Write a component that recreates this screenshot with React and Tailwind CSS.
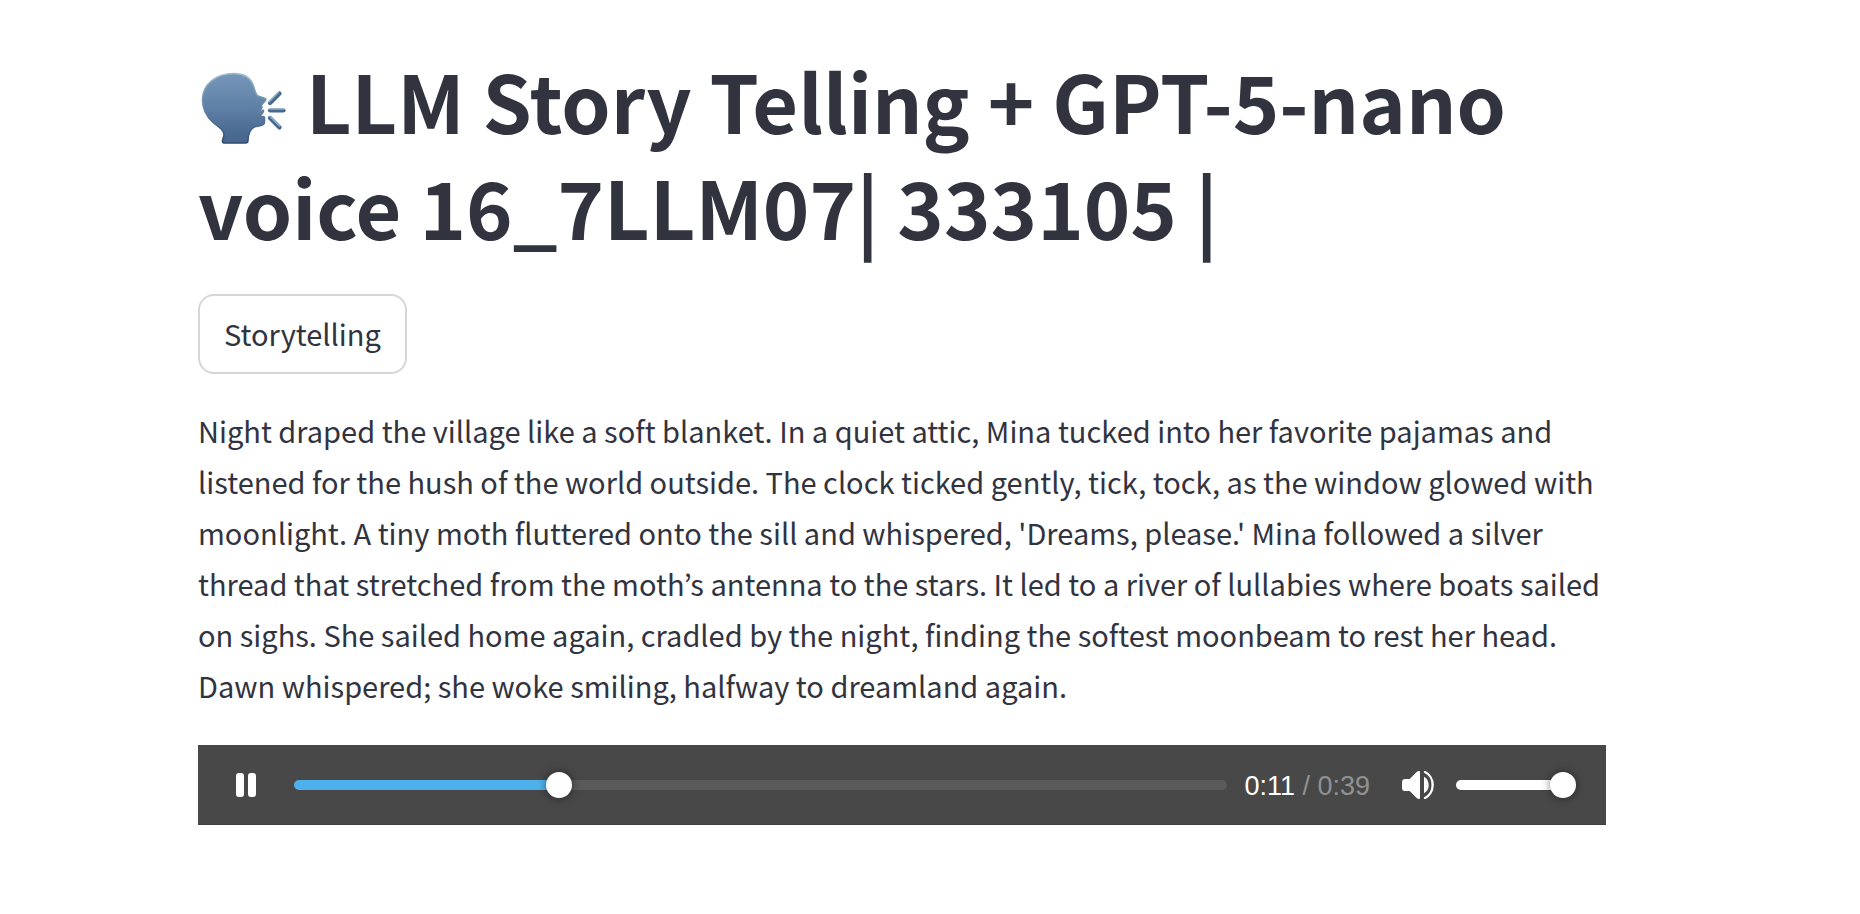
import { useState } from "react";

const STORY =
  "Night draped the village like a soft blanket. In a quiet attic, Mina tucked into her favorite pajamas and listened for the hush of the world outside. The clock ticked gently, tick, tock, as the window glowed with moonlight. A tiny moth fluttered onto the sill and whispered, 'Dreams, please.' Mina followed a silver thread that stretched from the moth’s antenna to the stars. It led to a river of lullabies where boats sailed on sighs. She sailed home again, cradled by the night, finding the softest moonbeam to rest her head. Dawn whispered; she woke smiling, halfway to dreamland again.";

const DURATION = 39;
const THUMB = 26;

function SpeakingHead() {
  return (
    <svg
      viewBox="0 0 90 80"
      className="inline-block h-[80px] w-[90px] align-[-14px]"
      role="img"
      aria-label="Speaking head"
    >
      <defs>
        <linearGradient id="head" x1="0" y1="0" x2="0" y2="1">
          <stop offset="0" stopColor="#7796b8" />
          <stop offset="0.5" stopColor="#5f80a6" />
          <stop offset="0.85" stopColor="#4a6a92" />
          <stop offset="1" stopColor="#4a678c" />
        </linearGradient>
        <linearGradient id="rim" x1="0" y1="0" x2="0" y2="1">
          <stop offset="0" stopColor="#9dbdd0" />
          <stop offset="0.5" stopColor="#6585a8" />
          <stop offset="1" stopColor="#2f4b74" />
        </linearGradient>
      </defs>
      <path
        d="M36 5.500C17 5.500 4.500 17 4.500 32C4.500 41 9 49 15 54.500C21 59 26 62 26 67L24.500 72.500Q24 75 27 75L47.500 75Q50 75 50 72.500C50 67 52 60 58 58.500C62 58 66.500 57.500 66.500 54.500L66.500 51Q67 48.500 65 48.500L61.500 48.500L65 44.500Q66 43 65 42L60 46L64 39.500L63.500 37L67.500 32.500Q68.500 30.500 66 30L60 28C57 26 57 21 55 16.500C52 9 45 5.500 36 5.500Z"
        fill="url(#head)"
        stroke="url(#rim)"
        strokeWidth="1.500"
        strokeLinejoin="round"
      />
      <g stroke="#48698f" strokeWidth="4.200" strokeLinecap="round">
        <path d="M72 35L81.500 25.500" />
        <path d="M72 42.500H85.500" />
        <path d="M72 50L81.500 59.500" />
      </g>
      <g stroke="#8ab4cc" strokeWidth="1.200" strokeLinecap="round">
        <path d="M71 34L80.500 24.500" />
        <path d="M72 41.200H85.500" />
        <path d="M72 48.500L81.500 58" />
      </g>
    </svg>
  );
}

function VolumeIcon() {
  return (
    <svg viewBox="0 0 96 84" className="block h-[28px] w-[32px]" aria-hidden="true">
      <path
        d="M10 24H23L44 3Q47 0 51 0Q54 0 54 3V81Q54 84 51 84Q47 84 44 81L23 60H10Q0 60 0 50V34Q0 24 10 24Z"
        fill="#fff"
      />
      <path d="M66 17Q80 25 80 42Q80 59 66 67Z" fill="#fff" />
      <path
        d="M69 3C82 9 92 24 92 42C92 60 82 75 69 81"
        fill="none"
        stroke="#fff"
        strokeWidth="7"
        strokeLinecap="round"
      />
    </svg>
  );
}

function Slider({ label, value, max, onChange, className }) {
  const ratio = value / max;
  const fill = `calc(${ratio * 100}% + ${(0.5 - ratio) * THUMB}px)`;
  return (
    <input
      type="range"
      aria-label={label}
      min={0}
      max={max}
      step="any"
      value={value}
      onChange={(e) => onChange(Number(e.target.value))}
      style={{ "--fill": fill }}
      className={`h-[26px] cursor-pointer appearance-none bg-transparent [&::-webkit-slider-runnable-track]:h-[10px] [&::-webkit-slider-runnable-track]:rounded-full [&::-webkit-slider-thumb]:-mt-[8px] [&::-webkit-slider-thumb]:size-[26px] [&::-webkit-slider-thumb]:appearance-none [&::-webkit-slider-thumb]:rounded-full [&::-webkit-slider-thumb]:bg-white [&::-webkit-slider-thumb]:shadow-[0_0_8px_rgba(0,0,0,0.5)] ${className}`}
    />
  );
}

function AudioPlayer() {
  const [time, setTime] = useState(10.85);
  const [volume, setVolume] = useState(1);
  const [playing, setPlaying] = useState(true);
  const format = (seconds) => {
    const s = Math.round(seconds);
    return `${Math.floor(s / 60)}:${String(s % 60).padStart(2, "0")}`;
  };

  return (
    <section
      aria-label="Audio player"
      className="mt-[34px] flex h-[80px] items-center border-b border-[#3f3f3f] bg-[#484848] pr-[30px] pl-[38px]"
    >
      <button
        type="button"
        aria-label={playing ? "Pause" : "Play"}
        onClick={() => setPlaying(!playing)}
        className="flex h-6 w-5 shrink-0 justify-between"
      >
        {playing ? (
          <>
            <span className="h-6 w-2 rounded-[3px] bg-white" />
            <span className="h-6 w-2 rounded-[3px] bg-white" />
          </>
        ) : (
          <svg viewBox="0 0 20 24" className="h-6 w-5" aria-hidden="true">
            <path d="M0 0L20 12L0 24Z" fill="#fff" />
          </svg>
        )}
      </button>
      <Slider
        label="Seek"
        value={time}
        max={DURATION}
        onChange={setTime}
        className="ml-[38px] min-w-0 flex-1 [&::-webkit-slider-runnable-track]:bg-[linear-gradient(to_right,#4fb1eb_var(--fill),#5a5a5a_var(--fill))]"
      />
      <div className="ml-[17px] pt-[2px] font-['Liberation_Sans',Arial,sans-serif] text-[27px] leading-8 whitespace-nowrap text-[#919191]">
        <span className="text-white">{format(time)}</span> / {format(DURATION)}
      </div>
      <button
        type="button"
        aria-label="Mute"
        onClick={() => setVolume(volume ? 0 : 1)}
        className="ml-[32px] shrink-0"
      >
        <VolumeIcon />
      </button>
      <Slider
        label="Volume"
        value={volume}
        max={1}
        onChange={setVolume}
        className="ml-[22px] w-[120px] shrink-0 [&::-webkit-slider-runnable-track]:bg-[linear-gradient(to_right,#ffffff_var(--fill),#5a5a5a_var(--fill))]"
      />
    </section>
  );
}

export default function App() {
  return (
    <main className="min-h-screen bg-white pt-[47px] pr-8 pb-16 pl-[198px] font-['Noto_Sans_CJK_KR',sans-serif] text-[#31333f]">
      <div className="max-w-[1408px]">
        <h1 className="text-[79px] leading-[106px] font-bold">
          <SpeakingHead /> LLM Story Telling + GPT-5-nano voice 16_7LLM07| 333105 |
        </h1>
        <button
          type="button"
          className="mt-[35px] block h-[80px] rounded-2xl border-2 border-[#d6d6d9] px-6 pb-[2px] text-[29px] leading-[51px]"
        >
          Storytelling
        </button>
        <p className="mt-[31px] text-[29px] leading-[51px]">{STORY}</p>
        <AudioPlayer />
      </div>
    </main>
  );
}
